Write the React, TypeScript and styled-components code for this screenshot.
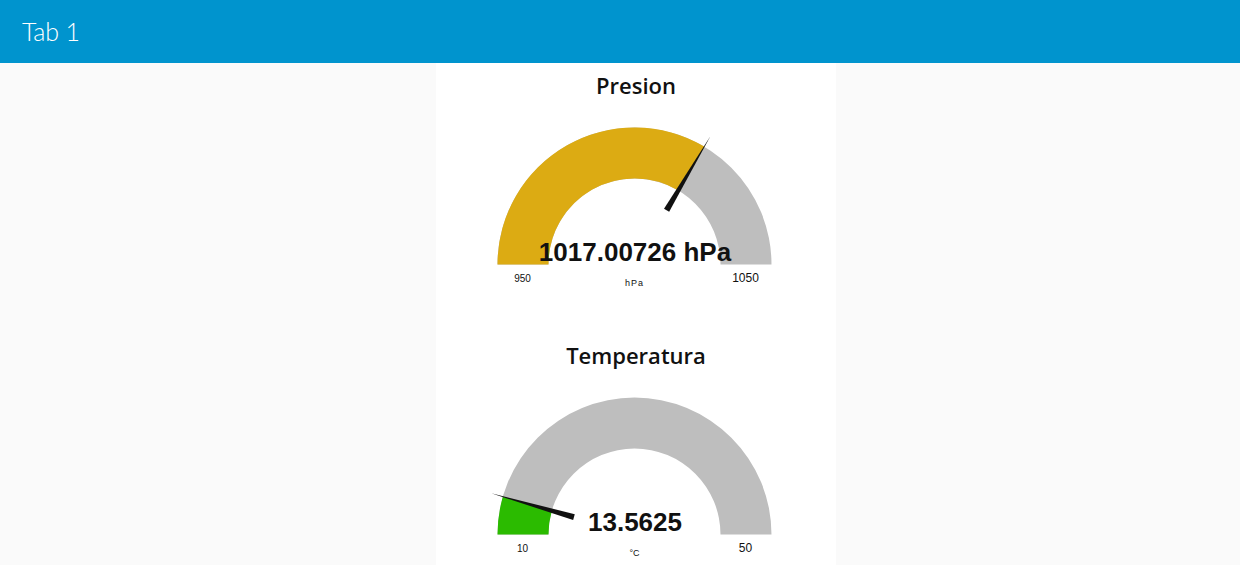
import styled, { createGlobalStyle } from "styled-components";

const GlobalStyle = createGlobalStyle`
  html, body {
    margin: 0;
    padding: 0;
    background: #fafafa;
    overflow: hidden;
  }
  body {
    font-family: "Open Sans", "Liberation Sans", sans-serif;
  }
`;

type GaugeProps = {
  title: string;
  value: number;
  display: string;
  min: number;
  max: number;
  units: string;
  color: string;
};

const Page = styled.div`
  height: 565px;
  overflow: hidden;
  display: flex;
  flex-direction: column;
`;

const Toolbar = styled.header`
  flex: none;
  height: 63px;
  background: #0094ce;
  display: flex;
  align-items: center;
  padding: 0 22px;
  box-sizing: border-box;
`;

const ToolbarTitle = styled.h1`
  margin: 0 0 2px;
  font-family: Lato, "Open Sans", sans-serif;
  font-weight: 300;
  font-size: 25px;
  letter-spacing: -0.2px;
  color: #ffffff;
`;

const Content = styled.div`
  flex: 1;
  display: flex;
  padding-left: 436px;
`;

const Card = styled.main`
  width: 400px;
  background: #ffffff;
  display: flex;
  flex-direction: column;
`;

const GaugeBlock = styled.section`
  flex: none;
  height: 270px;
  display: flex;
  flex-direction: column;
`;

const GaugeTitle = styled.h2`
  margin: 0;
  height: 46px;
  line-height: 44px;
  text-align: center;
  font-size: 22px;
  font-weight: 600;
  color: #111111;
`;

const GaugeSvg = styled.svg`
  display: block;
  width: 400px;
  height: 224px;

  text {
    font-family: "Liberation Sans", Arial, sans-serif;
    fill: #111111;
  }
`;

const CX = 198.5;
const CY = 155.5;
const R_OUT = 137;
const R_IN = 86;

function pt(r: number, deg: number) {
  const a = (deg * Math.PI) / 180;
  return [CX + r * Math.cos(a), CY - r * Math.sin(a)];
}

function sector(fromDeg: number, toDeg: number) {
  const [x1, y1] = pt(R_OUT, fromDeg);
  const [x2, y2] = pt(R_OUT, toDeg);
  const [x3, y3] = pt(R_IN, toDeg);
  const [x4, y4] = pt(R_IN, fromDeg);
  return `M${x1} ${y1} A${R_OUT} ${R_OUT} 0 0 1 ${x2} ${y2} L${x3} ${y3} A${R_IN} ${R_IN} 0 0 0 ${x4} ${y4} Z`;
}

// thin wedge from just outside the centre to past the outer rim
function needle(deg: number) {
  const a = (deg * Math.PI) / 180;
  const px = Math.sin(a) * 3;
  const py = Math.cos(a) * 3;
  const [bx, by] = pt(63, deg);
  const [tx, ty] = pt(149, deg);
  return `${bx - px},${by - py} ${bx + px},${by + py} ${tx},${ty}`;
}

function Gauge({ title, value, display, min, max, units, color }: GaugeProps) {
  const frac = Math.min(1, Math.max(0, (value - min) / (max - min)));
  const deg = 180 - frac * 180;
  return (
    <GaugeBlock>
      <GaugeTitle>{title}</GaugeTitle>
      <GaugeSvg viewBox="0 0 400 224">
        <path d={sector(180, 0)} fill="#bebebe" />
        <path d={sector(180, deg)} fill={color} />
        <polygon points={needle(deg)} fill="#111111" />
        <text x={199} y={152} textAnchor="middle" fontSize={26} fontWeight="bold">
          {display}
        </text>
        <text x={86.5} y={173} textAnchor="middle" fontSize={10}>
          {min}
        </text>
        <text x={309.5} y={173} textAnchor="middle" fontSize={12}>
          {max}
        </text>
        <text x={198.5} y={177} textAnchor="middle" fontSize={9} letterSpacing={units.length > 2 ? 1 : 0}>
          {units}
        </text>
      </GaugeSvg>
    </GaugeBlock>
  );
}

export default function App() {
  return (
    <Page>
      <GlobalStyle />
      <Toolbar>
        <ToolbarTitle>Tab 1</ToolbarTitle>
      </Toolbar>
      <Content>
        <Card>
          <Gauge
            title="Presion"
            value={1017.00726}
            display="1017.00726 hPa"
            min={950}
            max={1050}
            units="hPa"
            color="#dcab13"
          />
          <Gauge
            title="Temperatura"
            value={13.5625}
            display="13.5625"
            min={10}
            max={50}
            units="°C"
            color="#2bbb00"
          />
        </Card>
      </Content>
    </Page>
  );
}
